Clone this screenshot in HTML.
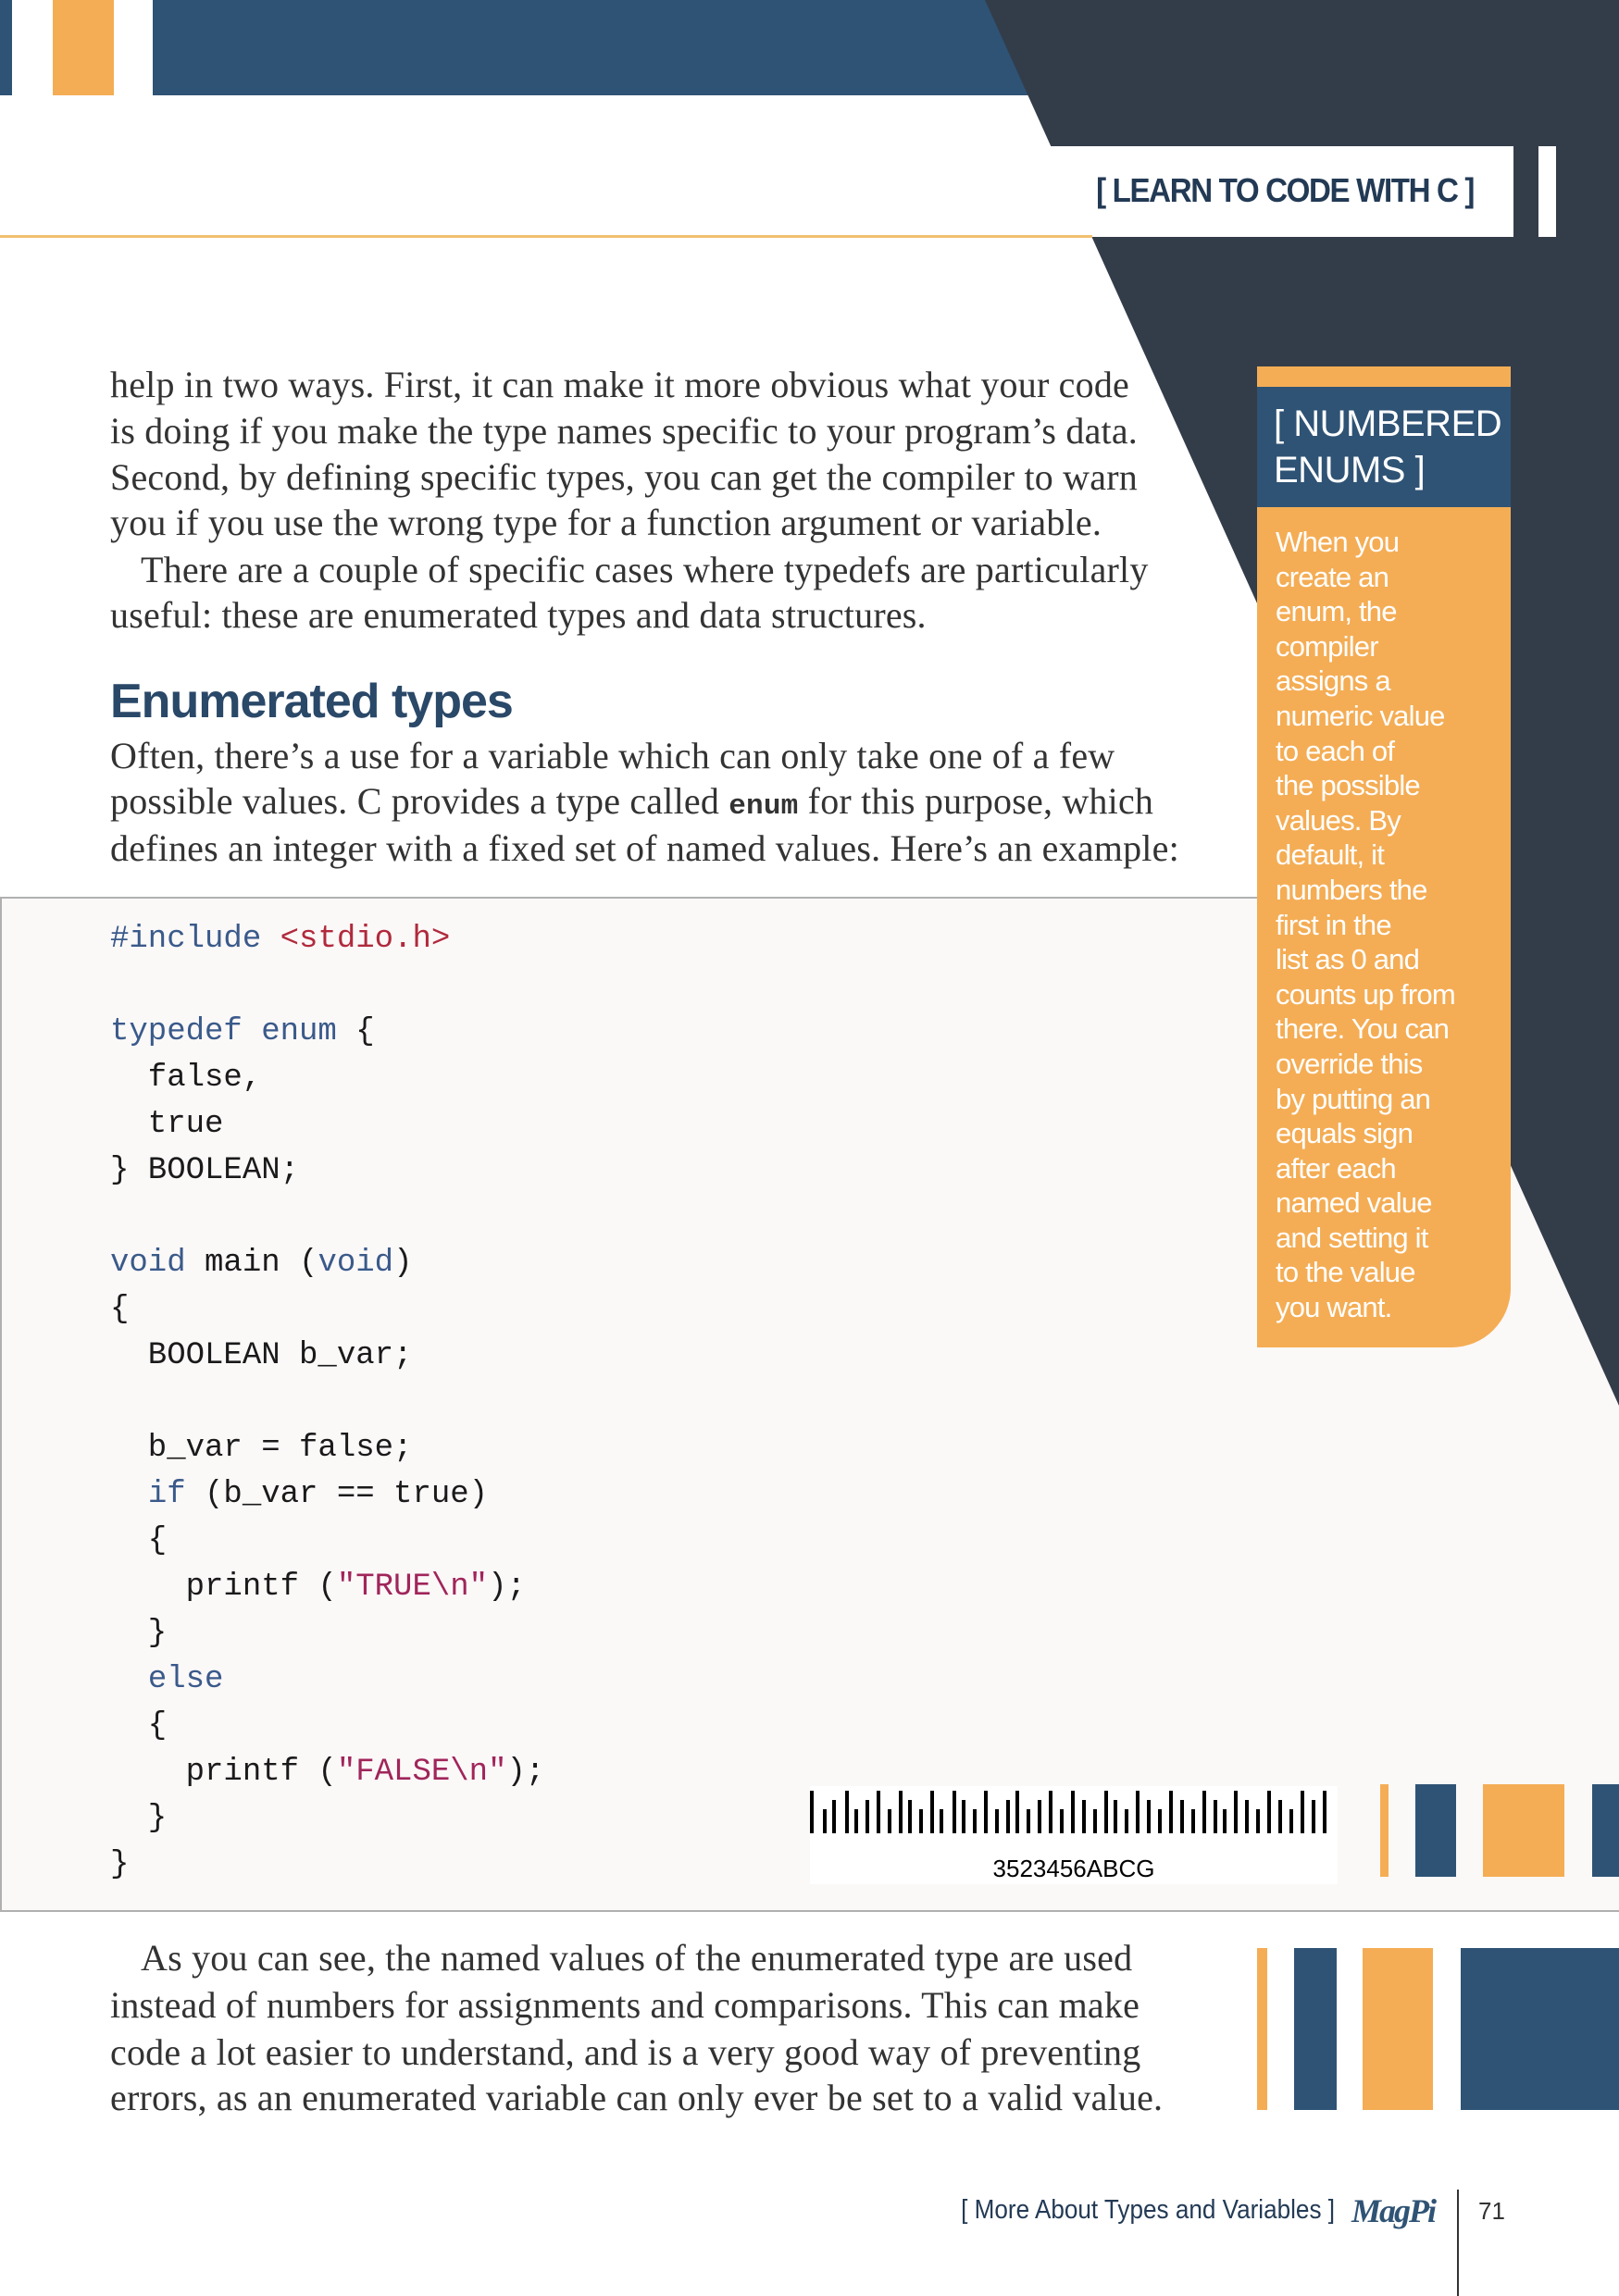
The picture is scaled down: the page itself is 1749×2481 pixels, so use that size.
<!DOCTYPE html>
<html><head><meta charset="utf-8"><style>
*{margin:0;padding:0;box-sizing:border-box}
html,body{width:1749px;height:2481px;overflow:hidden;background:#fff;position:relative}
.a{position:absolute;white-space:nowrap}
.s{font-family:"Liberation Serif",serif;font-size:40px;color:#333;left:119px;line-height:50px;height:50px;letter-spacing:0.2px}
.c{font-family:"Liberation Mono",monospace;font-size:34px;color:#1a1a1a;line-height:50px;height:50px;white-space:pre}
.k{color:#3a5a8a}.r{color:#b02a3c}.m{color:#a0255a}
.sb{font-family:"Liberation Sans",sans-serif;font-size:31px;color:#fff;left:1378px;line-height:37.6px;letter-spacing:-0.8px}
</style></head><body>
<div class="a" style="left:0;top:0;width:13px;height:103px;background:#2f5375"></div>
<div class="a" style="left:57px;top:0;width:66px;height:103px;background:#f4ad55"></div>
<div class="a" style="left:165px;top:0;width:1000px;height:103px;background:#2f5375"></div>
<svg class="a" style="left:0;top:0" width="1749" height="2481"><polygon points="1064,0 1749,0 1749,1519" fill="#333d4a"/></svg>
<div class="a" style="left:0;top:158px;width:1635px;height:98px;background:#fff"></div>
<div class="a" style="left:0;top:254px;width:1180px;height:3px;background:#f0c070"></div>
<div class="a" style="left:1662px;top:158px;width:19px;height:98px;background:#fff"></div>
<div class="a" style="left:1100px;top:185px;width:492px;text-align:right;font-family:'Liberation Sans',sans-serif;font-weight:bold;font-size:36px;color:#233a55;letter-spacing:-1.5px;transform:scaleX(0.92);transform-origin:right">[ LEARN TO CODE WITH C ]</div>
<div class="a s" style="top:391px">help in two ways. First, it can make it more obvious what your code</div>
<div class="a s" style="top:441px">is doing if you make the type names specific to your program’s data.</div>
<div class="a s" style="top:491px">Second, by defining specific types, you can get the compiler to warn</div>
<div class="a s" style="top:540px">you if you use the wrong type for a function argument or variable.</div>
<div class="a s" style="top:591px;left:152px">There are a couple of specific cases where typedefs are particularly</div>
<div class="a s" style="top:640px">useful: these are enumerated types and data structures.</div>
<div class="a" style="left:119px;top:728px;font-family:'Liberation Sans',sans-serif;font-weight:bold;font-size:52px;color:#2a4868;letter-spacing:-1px">Enumerated types</div>
<div class="a s" style="top:792px">Often, there’s a use for a variable which can only take one of a few</div>
<div class="a s" style="top:841px">possible values. C provides a type called <b style="font-family:'Liberation Mono',monospace;font-size:31px">enum</b> for this purpose, which</div>
<div class="a s" style="top:892px">defines an integer with a fixed set of named values. Here’s an example:</div>
<div class="a" style="left:0;top:969px;width:1749px;height:1097px;background:#fbf8f8;border-top:2px solid #b0b0b0;border-left:2px solid #b0b0b0;border-bottom:2px solid #b0b0b0"></div>
<svg class="a" style="left:0;top:969px" width="1749" height="600"><polygon points="1501,0 1749,0 1749,550" fill="#333d4a"/></svg>
<div class="a c" style="left:119px;top:990px"><span class="k">#include</span> <span class="r">&lt;stdio.h&gt;</span></div>
<div class="a c" style="left:119px;top:1090px"><span class="k">typedef enum</span> {</div>
<div class="a c" style="left:119px;top:1140px">  false,</div>
<div class="a c" style="left:119px;top:1190px">  true</div>
<div class="a c" style="left:119px;top:1240px">} BOOLEAN;</div>
<div class="a c" style="left:119px;top:1340px"><span class="k">void</span> main (<span class="k">void</span>)</div>
<div class="a c" style="left:119px;top:1390px">{</div>
<div class="a c" style="left:119px;top:1440px">  BOOLEAN b_var;</div>
<div class="a c" style="left:119px;top:1540px">  b_var = false;</div>
<div class="a c" style="left:119px;top:1590px">  <span class="k">if</span> (b_var == true)</div>
<div class="a c" style="left:119px;top:1640px">  {</div>
<div class="a c" style="left:119px;top:1690px">    printf (<span class="m">"TRUE\n"</span>);</div>
<div class="a c" style="left:119px;top:1740px">  }</div>
<div class="a c" style="left:119px;top:1790px">  <span class="k">else</span></div>
<div class="a c" style="left:119px;top:1840px">  {</div>
<div class="a c" style="left:119px;top:1890px">    printf (<span class="m">"FALSE\n"</span>);</div>
<div class="a c" style="left:119px;top:1940px">  }</div>
<div class="a c" style="left:119px;top:1990px">}</div>
<div class="a" style="left:1358px;top:396px;width:274px;height:22px;background:#f4ad55"></div>
<div class="a" style="left:1358px;top:418px;width:274px;height:130px;background:#2f5375"></div>
<div class="a" style="left:1376px;top:433px;font-family:'Liberation Sans',sans-serif;font-size:40px;color:#fff;line-height:50px;letter-spacing:-0.5px">[ NUMBERED<br>ENUMS ]</div>
<div class="a" style="left:1358px;top:548px;width:274px;height:908px;background:#f4ad55;border-bottom-right-radius:64px"></div>
<div class="a sb" style="top:567px">When you<br>create an<br>enum, the<br>compiler<br>assigns a<br>numeric value<br>to each of<br>the possible<br>values. By<br>default, it<br>numbers the<br>first in the<br>list as 0 and<br>counts up from<br>there. You can<br>override this<br>by putting an<br>equals sign<br>after each<br>named value<br>and setting it<br>to the value<br>you want.</div>
<div class="a" style="left:875px;top:1930px;width:570px;height:106px;background:#fff"></div>
<svg class="a" style="left:875px;top:1930px" width="570" height="80">
<g fill="#000">
<rect x="0" y="5" width="4" height="46"/><rect x="14" y="25" width="4" height="26"/><rect x="24" y="15" width="4" height="36"/><rect x="38" y="5" width="4" height="46"/><rect x="48" y="25" width="4" height="26"/><rect x="60" y="15" width="4" height="36"/><rect x="72" y="5" width="4" height="46"/><rect x="84" y="25" width="4" height="26"/><rect x="96" y="5" width="4" height="46"/><rect x="106" y="15" width="4" height="36"/><rect x="118" y="25" width="4" height="26"/><rect x="130" y="5" width="4" height="46"/><rect x="140" y="25" width="4" height="26"/><rect x="154" y="5" width="4" height="46"/><rect x="164" y="15" width="4" height="36"/><rect x="176" y="25" width="4" height="26"/><rect x="188" y="5" width="4" height="46"/><rect x="200" y="25" width="4" height="26"/><rect x="212" y="15" width="4" height="36"/><rect x="222" y="5" width="4" height="46"/><rect x="234" y="25" width="4" height="26"/><rect x="246" y="15" width="4" height="36"/><rect x="258" y="5" width="4" height="46"/><rect x="270" y="25" width="4" height="26"/><rect x="282" y="5" width="4" height="46"/><rect x="294" y="15" width="4" height="36"/><rect x="306" y="25" width="4" height="26"/><rect x="318" y="5" width="4" height="46"/><rect x="328" y="15" width="4" height="36"/><rect x="340" y="25" width="4" height="26"/><rect x="352" y="5" width="4" height="46"/><rect x="364" y="15" width="4" height="36"/><rect x="376" y="25" width="4" height="26"/><rect x="388" y="5" width="4" height="46"/><rect x="400" y="15" width="4" height="36"/><rect x="412" y="25" width="4" height="26"/><rect x="424" y="5" width="4" height="46"/><rect x="436" y="15" width="4" height="36"/><rect x="446" y="25" width="4" height="26"/><rect x="458" y="5" width="4" height="46"/><rect x="470" y="15" width="4" height="36"/><rect x="482" y="25" width="4" height="26"/><rect x="494" y="5" width="4" height="46"/><rect x="506" y="15" width="4" height="36"/><rect x="518" y="25" width="4" height="26"/><rect x="530" y="5" width="4" height="46"/><rect x="542" y="15" width="4" height="36"/><rect x="554" y="5" width="4" height="46"/>
</g></svg>
<div class="a" style="left:875px;top:2004px;width:570px;text-align:center;font-family:'Liberation Sans',sans-serif;font-size:26px;color:#000">3523456ABCG</div>
<div class="a" style="left:1491px;top:1928px;width:9px;height:100px;background:#f4ad55"></div>
<div class="a" style="left:1529px;top:1928px;width:44px;height:100px;background:#2f5375"></div>
<div class="a" style="left:1602px;top:1928px;width:88px;height:100px;background:#f4ad55"></div>
<div class="a" style="left:1720px;top:1928px;width:29px;height:100px;background:#2f5375"></div>
<div class="a" style="left:1358px;top:2105px;width:11px;height:175px;background:#f4ad55"></div>
<div class="a" style="left:1398px;top:2105px;width:46px;height:175px;background:#2f5375"></div>
<div class="a" style="left:1472px;top:2105px;width:76px;height:175px;background:#f4ad55"></div>
<div class="a" style="left:1578px;top:2105px;width:171px;height:175px;background:#2f5375"></div>
<div class="a s" style="top:2091px;left:152px">As you can see, the named values of the enumerated type are used</div>
<div class="a s" style="top:2142px">instead of numbers for assignments and comparisons. This can make</div>
<div class="a s" style="top:2193px">code a lot easier to understand, and is a very good way of preventing</div>
<div class="a s" style="top:2242px">errors, as an enumerated variable can only ever be set to a valid value.</div>
<div class="a" style="left:900px;top:2372px;width:542px;text-align:right;font-family:'Liberation Sans',sans-serif;font-size:29px;color:#233a55;transform:scaleX(0.9);transform-origin:right">[ More About Types and Variables ]</div>
<div class="a" style="left:1460px;top:2368px;font-family:'Liberation Serif',serif;font-style:italic;font-weight:bold;font-size:36px;color:#2f5375;letter-spacing:-2px">MagPi</div>
<div class="a" style="left:1574px;top:2366px;width:2px;height:115px;background:#333"></div>
<div class="a" style="left:1597px;top:2374px;font-family:'Liberation Sans',sans-serif;font-size:26px;color:#333">71</div>
</body></html>
